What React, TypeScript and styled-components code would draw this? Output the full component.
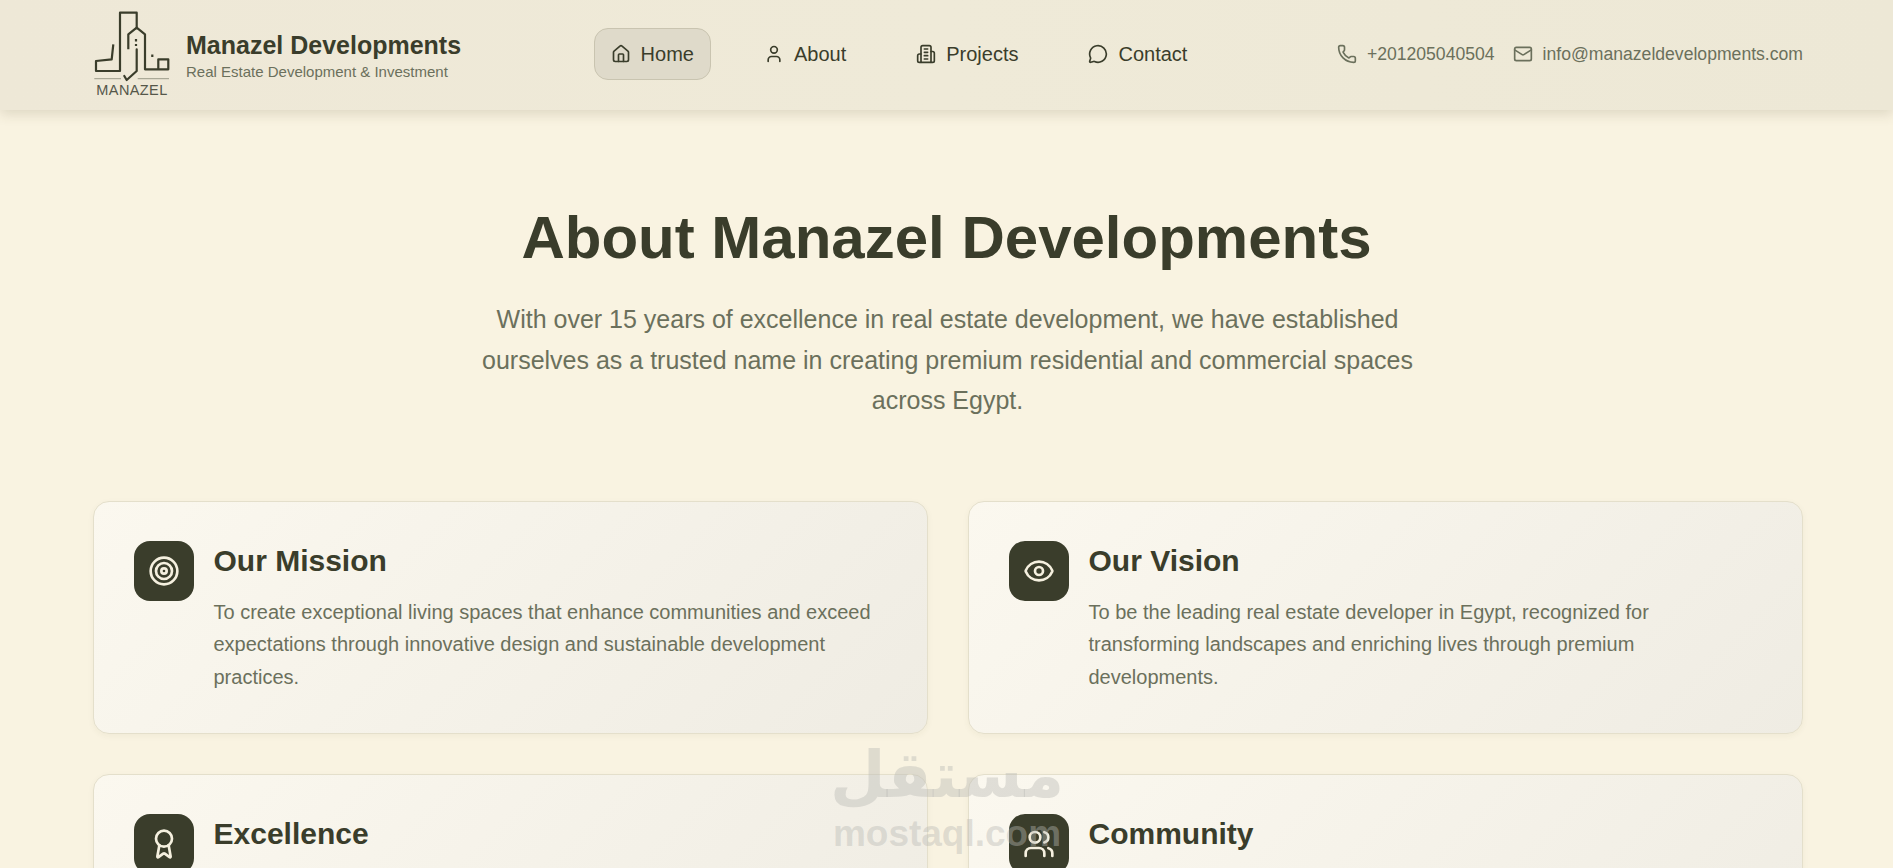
import React from "react";
import styled, { createGlobalStyle } from "styled-components";
import { House, User, MessageCircle, Phone, Mail, Target, Eye, Award, Users } from "lucide-react";

const Global = createGlobalStyle`
  html, body { margin: 0; padding: 0; height: 100%; overflow: hidden; background: #f9f3e1; }
  body { font-family: "Liberation Sans", Arial, sans-serif; color: #3a3d2b; }
  * { box-sizing: border-box; }
`;

const Page = styled.div`
  position: relative;
  height: 868px;
  overflow: hidden;
  background: #f9f3e1;
`;

const Header = styled.header`
  height: 110px;
  padding: 0 90px 2px 93px;
  display: flex;
  align-items: center;
  justify-content: space-between;
  background: linear-gradient(90deg, #eee8d7 0%, #efead8 50%, #ede8d6 100%);
  box-shadow: 0 4px 12px rgba(80, 70, 40, 0.16);
`;

const Brand = styled.div`
  display: flex;
  align-items: center;
  gap: 15px;
`;

const LogoBox = styled.div`
  width: 78px;
  display: flex;
  flex-direction: column;
  align-items: center;
`;

const LogoWord = styled.span`
  font-size: 14.5px;
  line-height: 14px;
  letter-spacing: 0.4px;
  color: #55574a;
`;

const BrandText = styled.div`
  display: flex;
  flex-direction: column;
  padding-top: 3px;
`;

const BrandName = styled.span`
  font-size: 25px;
  font-weight: 700;
  line-height: 32px;
  color: #3a3d2b;
`;

const BrandTag = styled.span`
  font-size: 15px;
  line-height: 22px;
  color: #6b705c;
`;

const Nav = styled.nav`
  display: flex;
  gap: 36px;
`;

const NavItem = styled.a<{ $active?: boolean }>`
  display: flex;
  align-items: center;
  gap: 10px;
  height: 52px;
  padding: 0 16px;
  font-size: 20px;
  color: #3a3d2b;
  border-radius: 14px;
  border: 1px solid ${(p) => (p.$active ? "#c9c4b0" : "transparent")};
  background: ${(p) => (p.$active ? "#dfdaca" : "transparent")};
`;

const ContactList = styled.div`
  display: flex;
  align-items: center;
  gap: 18px;
`;

const ContactItem = styled.span`
  display: flex;
  align-items: center;
  gap: 10px;
  font-size: 17.6px;
  color: #6b705c;
`;

const Hero = styled.section`
  padding: 98px 0 0;
  display: flex;
  flex-direction: column;
  align-items: center;
  text-align: center;
`;

const Title = styled.h1`
  margin: 0;
  font-size: 60px;
  line-height: 60px;
  font-weight: 700;
  color: #3a3d2b;
`;

const Lead = styled.p`
  margin: 31px 0 0;
  width: 960px;
  padding-left: 2px;
  font-size: 25px;
  line-height: 40.5px;
  color: #6b705c;
`;

const Cards = styled.section`
  margin: 80px 90px 0 93px;
  display: grid;
  grid-template-columns: 1fr 1fr;
  gap: 40px;
`;

const Card = styled.article`
  height: 233px;
  padding: 39px 40px;
  display: flex;
  gap: 19.5px;
  border-radius: 16px;
  border: 1px solid #e4dfcb;
  background: linear-gradient(135deg, #fbf8ef 0%, #efece3 100%);
  box-shadow: 0 2px 6px rgba(80, 70, 40, 0.05);
`;

const IconTile = styled.div`
  flex: none;
  width: 60px;
  height: 60px;
  border-radius: 16px;
  background: #3a3d2b;
  color: #f5f0df;
  display: flex;
  align-items: center;
  justify-content: center;
`;

const CardBody = styled.div`
  min-width: 0;
`;

const CardTitle = styled.h2`
  margin: 0 0 15px;
  font-size: 30px;
  line-height: 40px;
  font-weight: 700;
  color: #3a3d2b;
`;

const CardText = styled.p`
  margin: 0;
  font-size: 20px;
  line-height: 32.5px;
  color: #6b705c;
`;

const Watermark = styled.div`
  position: absolute;
  left: 832px;
  top: 738px;
  width: 230px;
  display: flex;
  flex-direction: column;
  align-items: center;
  color: rgba(185, 185, 180, 0.42);
  font-weight: 700;
  pointer-events: none;
`;

const WatermarkArabic = styled.span`
  font-family: "DejaVu Sans", sans-serif;
  font-size: 64px;
  line-height: 74px;
`;

const WatermarkLatin = styled.span`
  font-size: 37px;
  line-height: 44px;
  white-space: nowrap;
`;

const Logo = () => (
  <svg width="78" height="72" viewBox="0 0 78 72" fill="none" stroke="#3a3d2b" strokeWidth="2.2">
    <path d="M20.3 33.3 18.7 48.3 3 50v10h24V1.7h16.7v16.6" strokeLinejoin="round" />
    <path d="M35.3 38.3v-15l8.4-6.6 8.3 6.6v35h23.3v-10h-10v10" strokeLinejoin="round" />
    <path d="M43.7 38.3V60l-10 9-2.4-4" strokeLinecap="round" strokeLinejoin="round" />
    <path d="M43 28v2.5M43 33v2M59.3 43.5v2.5" />
    <path d="M1.3 67.7H28M44.7 67.7H76" stroke="#9a9b88" strokeWidth="1" />
  </svg>
);

const TowerIcon = () => (
  <svg width="20" height="20" viewBox="0 0 24 24" fill="none" stroke="currentColor" strokeWidth="2" strokeLinecap="round" strokeLinejoin="round">
    <path d="M6 22V4a2 2 0 0 1 2-2h8a2 2 0 0 1 2 2v18Z" />
    <path d="M6 12H4a2 2 0 0 0-2 2v6a2 2 0 0 0 2 2h2" />
    <path d="M18 9h2a2 2 0 0 1 2 2v9a2 2 0 0 1-2 2h-2" />
    <path d="M10 6h4M10 10h4M10 14h4M10 18h4" />
  </svg>
);

const cards: { icon: React.ReactNode; title: string; text?: string }[] = [
  { icon: <Target size={32} />, title: "Our Mission", text: "To create exceptional living spaces that enhance communities and exceed expectations through innovative design and sustainable development practices." },
  { icon: <Eye size={32} />, title: "Our Vision", text: "To be the leading real estate developer in Egypt, recognized for transforming landscapes and enriching lives through premium developments." },
  { icon: <Award size={32} />, title: "Excellence" },
  { icon: <Users size={32} />, title: "Community" },
];

export default function App() {
  return (
    <Page>
      <Global />
      <Header>
        <Brand>
          <LogoBox>
            <Logo />
            <LogoWord>MANAZEL</LogoWord>
          </LogoBox>
          <BrandText>
            <BrandName>Manazel Developments</BrandName>
            <BrandTag>Real Estate Development &amp; Investment</BrandTag>
          </BrandText>
        </Brand>
        <Nav>
          <NavItem $active><House size={20} />Home</NavItem>
          <NavItem><User size={20} />About</NavItem>
          <NavItem><TowerIcon />Projects</NavItem>
          <NavItem><MessageCircle size={20} />Contact</NavItem>
        </Nav>
        <ContactList>
          <ContactItem><Phone size={20} />+201205040504</ContactItem>
          <ContactItem><Mail size={20} />info@manazeldevelopments.com</ContactItem>
        </ContactList>
      </Header>
      <Hero>
        <Title>About Manazel Developments</Title>
        <Lead>
          With over 15 years of excellence in real estate development, we have established ourselves as a trusted name in creating premium residential and commercial spaces across Egypt.
        </Lead>
      </Hero>
      <Cards>
        {cards.map((c) => (
          <Card key={c.title}>
            <IconTile>{c.icon}</IconTile>
            <CardBody>
              <CardTitle>{c.title}</CardTitle>
              {c.text && <CardText>{c.text}</CardText>}
            </CardBody>
          </Card>
        ))}
      </Cards>
      <Watermark>
        <WatermarkArabic>مستقل</WatermarkArabic>
        <WatermarkLatin>mostaql.com</WatermarkLatin>
      </Watermark>
    </Page>
  );
}
